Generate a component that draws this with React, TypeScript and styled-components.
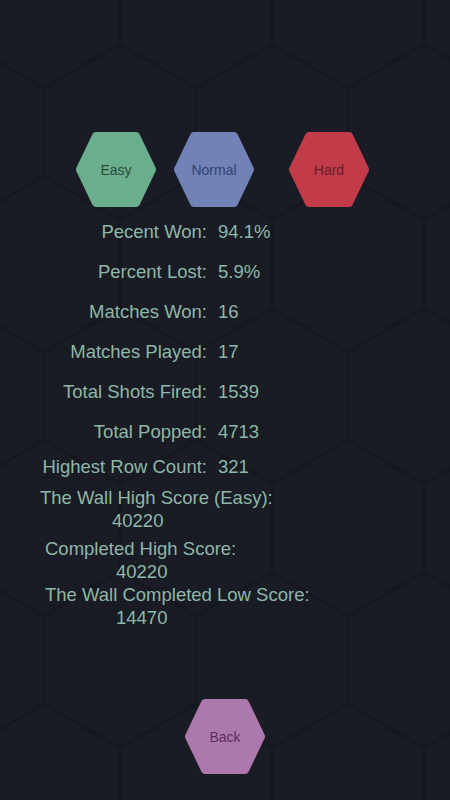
import React from "react";
import styled, { createGlobalStyle } from "styled-components";

const GlobalStyle = createGlobalStyle`
  html, body {
    margin: 0;
    padding: 0;
    background: #191c25;
  }
  body {
    font-family: "Liberation Sans", Arial, sans-serif;
  }
`;

const Page = styled.div`
  position: relative;
  width: 450px;
  height: 800px;
  overflow: hidden;
  background: #191c25;
  color: #8db7a6;
  font-family: "Liberation Sans", Arial, sans-serif;
`;

const Backdrop = styled.svg`
  position: absolute;
  inset: 0;
  width: 100%;
  height: 100%;
  pointer-events: none;
`;

const Content = styled.div`
  position: relative;
  display: flex;
  flex-direction: column;
  padding-top: 132px;
`;

const DifficultyRow = styled.div`
  display: flex;
  padding-left: 76px;
`;

const HexWrap = styled.button<{ $ml?: number }>`
  position: relative;
  width: 80px;
  height: 75px;
  margin-left: ${(p) => p.$ml ?? 0}px;
  padding: 0;
  border: none;
  background: transparent;
  display: flex;
  align-items: center;
  justify-content: center;
  cursor: pointer;
  font-family: "Liberation Sans", Arial, sans-serif;
`;

const HexShape = styled.svg`
  position: absolute;
  inset: 0;
  width: 80px;
  height: 75px;
`;

const HexLabel = styled.span<{ $ink: string }>`
  position: relative;
  font-size: 14px;
  color: ${(p) => p.$ink};
`;

const Spacer = styled.div`
  height: 5px;
`;

const StatRow = styled.div<{ $h: number }>`
  display: grid;
  grid-template-columns: 207px auto;
  column-gap: 11px;
  align-items: center;
  height: ${(p) => p.$h}px;
  font-size: 18.5px;
`;

const Label = styled.span`
  text-align: right;
  white-space: nowrap;
`;

const Value = styled.span`
  white-space: nowrap;
`;

const Wrapped = styled.div<{ $left: number; $mt: number }>`
  padding-left: ${(p) => p.$left}px;
  margin-top: ${(p) => p.$mt}px;
  font-size: 18.5px;
  line-height: 23px;
  white-space: nowrap;
`;

const WrappedValue = styled.div<{ $indent: number }>`
  padding-left: ${(p) => p.$indent}px;
`;

const BackRow = styled.div`
  display: flex;
  justify-content: center;
  margin-top: 70px;
`;

type HexProps = {
  label: string;
  fill: string;
  ink: string;
  ml?: number;
};

const Hex = ({ label, fill, ink, ml }: HexProps) => (
  <HexWrap $ml={ml}>
    <HexShape viewBox="0 0 80 75">
      <polygon
        points="4,37.5 20,4 60,4 76,37.5 60,71 20,71"
        fill={fill}
        stroke={fill}
        strokeWidth={8}
        strokeLinejoin="round"
      />
    </HexShape>
    <HexLabel $ink={ink}>{label}</HexLabel>
  </HexWrap>
);

const simpleStats: [string, string, number][] = [
  ["Pecent Won:", "94.1%", 40],
  ["Percent Lost:", "5.9%", 40],
  ["Matches Won:", "16", 40],
  ["Matches Played:", "17", 40],
  ["Total Shots Fired:", "1539", 40],
  ["Total Popped:", "4713", 40],
  ["Highest Row Count:", "321", 30],
];

const wrappedStats: { label: string; value: string; left: number; indent: number; mt: number }[] = [
  { label: "The Wall High Score (Easy):", value: "40220", left: 40, indent: 72, mt: 4 },
  { label: "Completed High Score:", value: "40220", left: 45, indent: 71, mt: 5 },
  { label: "The Wall Completed Low Score:", value: "14470", left: 45, indent: 71, mt: 0 },
];

const hexPath = (cx: number, cy: number) => {
  const s = 88;
  const w = 76;
  return `M${cx},${cy - s} L${cx + w},${cy - s / 2} L${cx + w},${cy + s / 2} L${cx},${cy + s} L${cx - w},${cy + s / 2} L${cx - w},${cy - s / 2} Z`;
};

const Honeycomb = () => {
  const paths: string[] = [];
  for (let r = 0; r < 8; r++) {
    const cy = r * 132;
    const offset = r % 2 === 0 ? 196 : 120;
    for (let k = -2; k < 4; k++) {
      paths.push(hexPath(offset + k * 152, cy));
    }
  }
  return (
    <Backdrop viewBox="0 0 450 800">
      {paths.map((d, i) => (
        <path key={i} d={d} fill="none" stroke="#161820" strokeWidth={3} opacity={0.6} />
      ))}
    </Backdrop>
  );
};

export default function App() {
  return (
    <>
      <GlobalStyle />
      <Page>
        <Honeycomb />
        <Content>
          <DifficultyRow>
            <Hex label="Easy" fill="#6aae8d" ink="#2c4a3c" />
            <Hex label="Normal" fill="#7382b6" ink="#34436e" ml={18} />
            <Hex label="Hard" fill="#c13c48" ink="#64202b" ml={35} />
          </DifficultyRow>
          <Spacer />
          {simpleStats.map(([l, v, h]) => (
            <StatRow key={l} $h={h}>
              <Label>{l}</Label>
              <Value>{v}</Value>
            </StatRow>
          ))}
          {wrappedStats.map((s) => (
            <Wrapped key={s.label} $left={s.left} $mt={s.mt}>
              <div>{s.label}</div>
              <WrappedValue $indent={s.indent}>{s.value}</WrappedValue>
            </Wrapped>
          ))}
          <BackRow>
            <Hex label="Back" fill="#ad79ad" ink="#5a2f5e" />
          </BackRow>
        </Content>
      </Page>
    </>
  );
}
